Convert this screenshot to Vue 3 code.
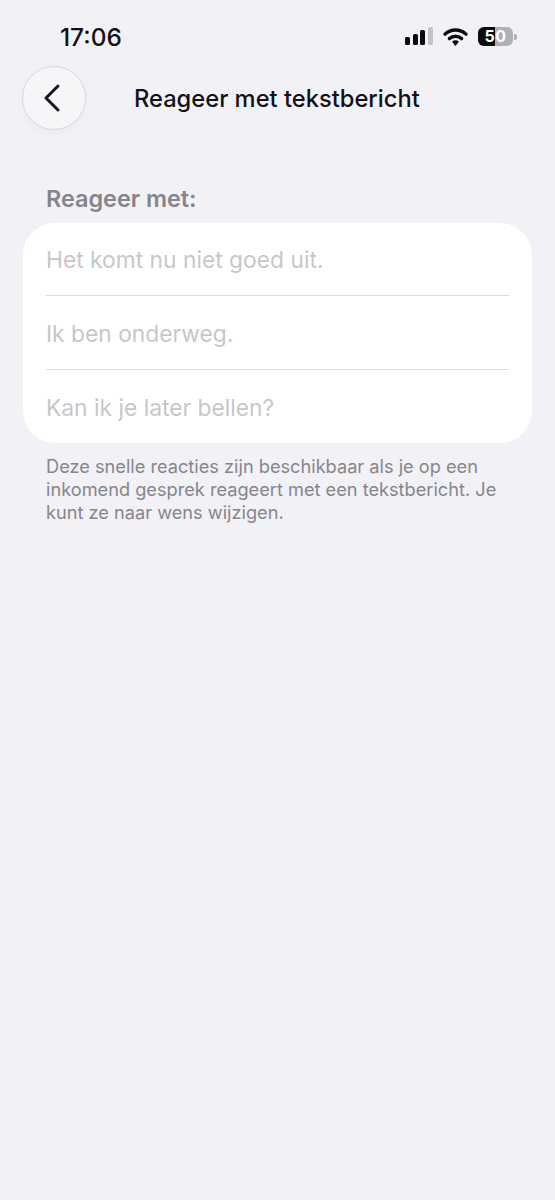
<script setup>
const replies = ['Het komt nu niet goed uit.', 'Ik ben onderweg.', 'Kan ik je later bellen?']
</script>

<template>
  <div class="screen">
    <div class="status-bar">
      <span class="time">17:06</span>
      <div class="status-icons">
        <div class="signal">
          <i class="bar b1"></i>
          <i class="bar b2"></i>
          <i class="bar b3"></i>
          <i class="bar b4"></i>
        </div>
        <svg class="wifi" width="25" height="19" viewBox="0 0 26 20">
          <path d="M2 7.5a16 16 0 0 1 22 0" fill="none" stroke="#0b0b10" stroke-width="3.6" stroke-linecap="round" />
          <path d="M6.6 12.2a9.4 9.4 0 0 1 12.8 0" fill="none" stroke="#0b0b10" stroke-width="3.6" stroke-linecap="round" />
          <path d="M9.4 15.6 13 20l3.6-4.4a5 5 0 0 0-7.2 0z" fill="#0b0b10" />
        </svg>
        <div class="battery">
          <div class="battery-body">
            <span class="battery-fill"></span>
            <span class="battery-num">50</span>
          </div>
          <i class="battery-cap"></i>
        </div>
      </div>
    </div>

    <div class="nav-bar">
      <button class="back-btn">
        <svg width="20" height="30" viewBox="0 0 20 30">
          <path d="M16 3 4 15l12 12" fill="none" stroke="#16161c" stroke-width="3" stroke-linecap="round" stroke-linejoin="round" />
        </svg>
      </button>
      <h1 class="title">Reageer met tekstbericht</h1>
    </div>

    <div class="content">
      <div class="section-label">Reageer met:</div>
      <div class="card">
        <div v-for="reply in replies" :key="reply" class="row">{{ reply }}</div>
      </div>
      <p class="hint">Deze snelle reacties zijn beschikbaar als je op een inkomend gesprek reageert met een tekstbericht. Je kunt ze naar wens wijzigen.</p>
    </div>
  </div>
</template>

<style scoped>
.screen {
  height: 1200px;
  background: #f1f1f6;
  font-family: Inter, "Liberation Sans", sans-serif;
  overflow: hidden;
}

.status-bar {
  height: 66px;
  padding: 8px 38px 0 60px;
  display: flex;
  align-items: center;
  justify-content: space-between;
  box-sizing: border-box;
}

.time {
  font-size: 24.4px;
  font-weight: 500;
  color: #111116;
}

.status-icons {
  display: flex;
  align-items: center;
  gap: 10px;
}

.signal {
  display: flex;
  align-items: flex-end;
  gap: 2.67px;
  height: 18px;
  margin-bottom: 2px;
}

.bar {
  width: 5px;
  border-radius: 1.5px;
  background: #0b0b10;
}

.b1 { height: 8px; }
.b2 { height: 11px; }
.b3 { height: 15px; }
.b4 { height: 18px; background: #c4c4c8; }

.wifi {
  display: block;
  margin-bottom: 1px;
}

.battery {
  display: flex;
  align-items: center;
  gap: 1px;
  margin-bottom: 1px;
}

.battery-body {
  position: relative;
  width: 35px;
  height: 19px;
  border-radius: 6px;
  background: #b0b0b4;
  overflow: hidden;
}

.battery-fill {
  position: absolute;
  left: 0;
  top: 0;
  bottom: 0;
  width: 17px;
  background: #0b0b10;
}

.battery-num {
  position: absolute;
  inset: 0;
  text-align: center;
  line-height: 19px;
  font-size: 16px;
  font-weight: 700;
  letter-spacing: 0.5px;
  color: #fff;
}

.battery-cap {
  width: 3px;
  height: 6px;
  border-radius: 0 2px 2px 0;
  background: #b0b0b4;
}

.nav-bar {
  display: flex;
  align-items: center;
  height: 64px;
  padding-left: 22px;
}

.back-btn {
  width: 64px;
  height: 64px;
  padding: 0 4px 0 0;
  box-sizing: border-box;
  display: flex;
  align-items: center;
  justify-content: center;
  border: 1px solid #d8d8de;
  border-radius: 50%;
  background: #f6f6f9;
  box-shadow: 0 3px 10px rgba(0, 0, 0, 0.03);
}

.title {
  margin: 0 0 0 48px;
  font-size: 23.7px;
  font-weight: 500;
  color: #121217;
  white-space: nowrap;
}

.content {
  padding: 55px 23px 0;
}

.section-label {
  padding-left: 23px;
  font-size: 23.4px;
  line-height: 28px;
  font-weight: 600;
  color: #85858b;
}

.card {
  margin-top: 10px;
  padding: 0 23px;
  background: #fff;
  border-radius: 32px;
}

.row {
  height: 74px;
  line-height: 75px;
  font-size: 22.8px;
  color: #c7c7c9;
  border-bottom: 1px solid #dcdcdf;
  box-sizing: border-box;
}

.row:first-child {
  height: 73px;
  line-height: 74px;
}

.row:last-child {
  height: 73px;
  border-bottom: none;
}

.hint {
  margin: 12px 0 0;
  padding: 0 23px;
  font-size: 18.2px;
  line-height: 23px;
  color: #86868c;
}
</style>

<style>
body {
  background: #f1f1f6;
}
</style>
